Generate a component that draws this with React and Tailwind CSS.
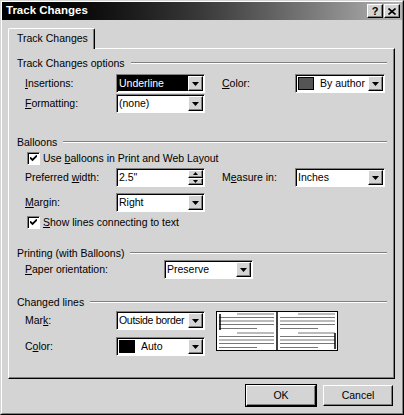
import React from 'react'

// Classic Windows "Track Changes" dialog, grayscale

const raised = 'border border-t-white border-l-white border-r-black border-b-black shadow-[inset_-1px_-1px_0_#808080]'
const sunken = 'border border-t-[#808080] border-l-[#808080] border-r-white border-b-white shadow-[inset_1px_1px_0_#000]'

function Arrow() {
  return (
    <svg width="7" height="4" viewBox="0 0 7 4">
      <path d="M0 0h7L3.5 4z" fill="#000" />
    </svg>
  )
}

function DropButton() {
  return (
    <div className={`w-[15px] h-full bg-[#d4d4d4] flex items-center justify-center shrink-0 ${raised}`}>
      <Arrow />
    </div>
  )
}

function Select({ width = 'w-[89px]', children, highlight }) {
  return (
    <div className={`${width} h-[19px] bg-white flex ${sunken} p-[1px] shrink-0`}>
      <div className={`flex-1 flex items-center pl-[1px] whitespace-nowrap overflow-hidden ${highlight ? 'bg-black text-white' : ''}`}>
        {children}
      </div>
      <DropButton />
    </div>
  )
}

function Checkbox({ children }) {
  return (
    <div className="h-[14px] flex items-center pl-[10px] gap-[3px]">
      <div className={`w-[13px] h-[13px] bg-white flex items-center justify-center ${sunken}`}>
        <svg width="7" height="7" viewBox="0 0 7 7">
          <path d="M0 2.5l2.5 2.5L7 0.5" stroke="#000" strokeWidth="1.8" fill="none" />
        </svg>
      </div>
      <span>{children}</span>
    </div>
  )
}

function SectionHeader({ children, className = '' }) {
  return (
    <div className={`h-[14px] flex items-center gap-[6px] ${className}`}>
      <span className="whitespace-nowrap">{children}</span>
      <div className="flex-1 h-[2px] border-t border-t-[#808080] border-b border-b-white" />
    </div>
  )
}

function Label({ width = 'w-[99px]', children }) {
  return <div className={`${width} shrink-0 pl-[8px] whitespace-nowrap`}>{children}</div>
}

function Preview() {
  const page = (x) =>
    [3, 22].map((y0) => (
      <g key={y0}>
        <line x1={x + 20} y1={y0} x2={x + 57} y2={y0} />
        <line x1={x + 2} y1={y0 + 3.5} x2={x + 57} y2={y0 + 3.5} />
        <line x1={x + 2} y1={y0 + 7} x2={x + 57} y2={y0 + 7} />
        <line x1={x + 2} y1={y0 + 10.5} x2={x + 57} y2={y0 + 10.5} />
        <line x1={x + 2} y1={y0 + 14.5} x2={x + 40} y2={y0 + 14.5} />
      </g>
    ))
  return (
    <svg width="122" height="40" viewBox="0 0 122 40" className="block">
      <rect x="0.5" y="0.5" width="121" height="39" fill="#fff" stroke="#000" />
      <line x1="61" y1="0" x2="61" y2="40" stroke="#000" strokeWidth="1.5" />
      <g stroke="#777" strokeWidth="1">
        {page(1)}
        {page(62)}
      </g>
      <line x1="4" y1="3" x2="4" y2="19" stroke="#000" strokeWidth="1.5" />
      <line x1="119" y1="22" x2="119" y2="38" stroke="#000" strokeWidth="1.5" />
    </svg>
  )
}

function Swatch({ color }) {
  return <div className={`w-[16px] h-[13px] border border-black ${color} mr-[6px] shrink-0`} />
}

function Button({ children, isDefault }) {
  return (
    <div
      className={`w-[70px] h-[21px] flex items-center justify-center bg-[#d4d4d4] ${
        isDefault ? 'outline outline-1 outline-black' : ''
      } ${raised}`}
    >
      {children}
    </div>
  )
}

export default function App() {
  return (
    <div className="w-[404px] h-[415px] bg-[#d4d4d4] text-black text-[10.5px] leading-none font-['Liberation_Sans',Arial,sans-serif] border border-t-[#d4d4d4] border-l-[#d4d4d4] border-r-black border-b-black">
      <div className="h-[413px] border border-t-white border-l-white border-r-[#808080] border-b-[#808080] flex flex-col">
        {/* Title bar */}
        <div className="h-[18px] bg-linear-to-r from-black via-[#3a3a3a] to-[#b4b4b4] flex items-center pl-[4px] pr-[2px]">
          <span className="text-white font-bold text-[11.5px] flex-1">Track Changes</span>
          <div className={`w-[16px] h-[14px] bg-[#d4d4d4] flex items-center justify-center font-bold text-[11px] ${raised}`}>?</div>
          <div className={`w-[16px] h-[14px] bg-[#d4d4d4] flex items-center justify-center ml-[1px] ${raised}`}>
            <svg width="8" height="7" viewBox="0 0 8 7">
              <path d="M0.5 0.5l7 6M7.5 0.5l-7 6" stroke="#000" strokeWidth="1.6" />
            </svg>
          </div>
        </div>

        {/* Tabs + panel */}
        <div className="pl-[6px] pt-[8px] flex flex-col">
          <div className="relative z-10 -mb-px w-[87px] h-[21px] bg-[#d4d4d4] border border-b-0 border-t-white border-l-white border-r-black rounded-t-[2px] shadow-[inset_-1px_0_0_#808080] flex items-center pl-[8px] pb-[1px]">
            Track Changes
          </div>
          <div className="w-[387px] h-[331px] border border-t-white border-l-white border-r-black border-b-black shadow-[inset_-1px_-1px_0_#808080] pl-[8px] pr-[7px] pt-[7px] flex flex-col">
            <SectionHeader>Track Changes options</SectionHeader>

            <div className="mt-[4px] h-[19px] flex items-center">
              <Label><u>I</u>nsertions:</Label>
              <Select highlight>Underline</Select>
              <div className="ml-[17px] w-[73px] shrink-0"><u>C</u>olor:</div>
              <Select width="w-[90px]">
                <Swatch color="bg-[#555]" />
                By author
              </Select>
            </div>
            <div className="mt-[1px] h-[19px] flex items-center">
              <Label><u>F</u>ormatting:</Label>
              <Select>(none)</Select>
            </div>

            <SectionHeader className="mt-[22px]">Balloons</SectionHeader>
            <div className="mt-[2px]">
              <Checkbox>Use <u>b</u>alloons in Print and Web Layout</Checkbox>
            </div>
            <div className="mt-[3px] h-[19px] flex items-center">
              <Label>Preferred <u>w</u>idth:</Label>
              <div className={`w-[89px] h-[19px] bg-white flex ${sunken} p-[1px] shrink-0`}>
                <div className="flex-1 flex items-center pl-[1px]">2.5"</div>
                <div className="w-[15px] h-full flex flex-col">
                  <div className={`flex-1 bg-[#d4d4d4] flex items-center justify-center ${raised}`}>
                    <svg width="5" height="3" viewBox="0 0 5 3"><path d="M0 3h5L2.5 0z" fill="#000" /></svg>
                  </div>
                  <div className={`flex-1 bg-[#d4d4d4] flex items-center justify-center ${raised}`}>
                    <svg width="5" height="3" viewBox="0 0 5 3"><path d="M0 0h5L2.5 3z" fill="#000" /></svg>
                  </div>
                </div>
              </div>
              <div className="ml-[17px] w-[73px] shrink-0">M<u>e</u>asure in:</div>
              <Select width="w-[90px]">Inches</Select>
            </div>
            <div className="mt-[6px] h-[19px] flex items-center">
              <Label><u>M</u>argin:</Label>
              <Select>Right</Select>
            </div>
            <div className="mt-[3px]">
              <Checkbox><u>S</u>how lines connecting to text</Checkbox>
            </div>

            <SectionHeader className="mt-[17px]">Printing (with Balloons)</SectionHeader>
            <div className="mt-[0px] h-[19px] flex items-center">
              <Label width="w-[147px]"><u>P</u>aper orientation:</Label>
              <Select>Preserve</Select>
            </div>

            <SectionHeader className="mt-[16px]">Changed lines</SectionHeader>
            <div className="mt-[2px] flex">
              <div className="flex flex-col">
                <div className="h-[19px] flex items-center">
                  <Label>Mar<u>k</u>:</Label>
                  <Select>
                    <span className="tracking-[-0.3px]">Outside border</span>
                  </Select>
                </div>
                <div className="mt-[7px] h-[19px] flex items-center">
                  <Label>C<u>o</u>lor:</Label>
                  <Select>
                    <Swatch color="bg-black" />
                    Auto
                  </Select>
                </div>
              </div>
              <div className="ml-[11px]">
                <Preview />
              </div>
            </div>
          </div>
        </div>

        {/* Buttons */}
        <div className="mt-[6px] flex justify-end gap-[7px] pr-[9px]">
          <Button isDefault>OK</Button>
          <Button>Cancel</Button>
        </div>
      </div>
    </div>
  )
}
